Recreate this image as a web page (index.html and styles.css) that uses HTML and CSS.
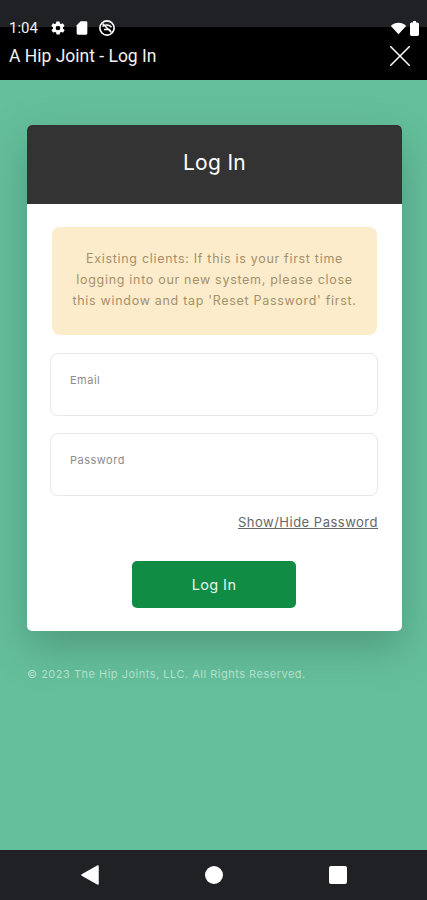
FILE: index.html
```html
<!DOCTYPE html>
<html lang="en">
<head>
    <meta charset="UTF-8">
    <meta name="viewport" content="width=device-width, initial-scale=1.0">
    <title>A Hip Joint - Log In</title>
    <link rel="stylesheet" href="styles.css">
</head>
<body>
    <header class="topbar">
        <div class="status">
            <span class="time">1:04</span>
            <svg class="status-icon" viewBox="0 0 24 24" width="16" height="16"><path fill="#fff" d="M19.4 13c.1-.3.1-.7.1-1s0-.7-.1-1l2.100-1.600c.2-.2.2-.4.1-.6l-2-3.500c-.1-.2-.4-.3-.6-.2l-2.500 1c-.5-.4-1.100-.7-1.700-1l-.4-2.600c0-.2-.2-.4-.5-.4h-4c-.2 0-.5.2-.5.400l-.4 2.600c-.6.300-1.200.6-1.700 1l-2.500-1c-.2-.1-.5 0-.6.200l-2 3.500c-.1.200-.1.400.1.600L4.600 11c-.1.300-.1.700-.1 1s0 .7.1 1l-2.100 1.600c-.2.200-.2.400-.1.600l2 3.500c.1.200.4.300.6.200l2.500-1c.5.400 1.100.7 1.700 1l.4 2.600c0 .2.300.4.500.4h4c.3 0 .5-.2.500-.4l.4-2.600c.6-.3 1.200-.6 1.700-1l2.500 1c.2.100.5 0 .6-.2l2-3.500c.1-.2.100-.4-.1-.6zM12 15.500a3.500 3.500 0 1 1 0-7 3.500 3.500 0 0 1 0 7z"/></svg>
            <svg class="status-icon" viewBox="0 0 24 24" width="16" height="16"><path fill="#fff" d="M18 2h-8L4 8v12c0 1.100.9 2 2 2h12c1.100 0 2-.9 2-2V4c0-1.100-.9-2-2-2z"/></svg>
            <svg class="status-icon" viewBox="0 0 24 24" width="18" height="18"><circle cx="12" cy="12" r="9.500" fill="none" stroke="#fff" stroke-width="2.200"/><path fill="none" stroke="#fff" stroke-width="2" d="M6 10c3-3 9-3 12 1M8 14h7l2 2M6 6l12 12"/></svg>
            <span class="status-right">
                <svg viewBox="0 0 24 20" width="17" height="14"><path fill="#fff" d="M12 19 1 7c6-6 16-6 22 0z"/></svg>
                <svg viewBox="0 0 12 20" width="9" height="15"><path fill="#fff" d="M4 0h4v2h2c1 0 2 1 2 2v14c0 1-1 2-2 2H2c-1 0-2-1-2-2V4c0-1 1-2 2-2h2z"/></svg>
            </span>
        </div>
        <div class="titlebar">
            <span class="page-title">A Hip Joint - Log In</span>
            <svg class="close" viewBox="0 0 20 20" width="20" height="20"><path stroke="#fff" stroke-width="1.500" d="M0 0l20 20M20 0 0 20"/></svg>
        </div>
    </header>

    <main class="content">
        <div class="card">
            <div class="card-head">Log In</div>
            <div class="card-body">
                <div class="notice">Existing clients: If this is your first time<br>logging into our new system, please close<br>this window and tap 'Reset Password' first.</div>
                <div class="field"><label>Email</label></div>
                <div class="field"><label>Password</label></div>
                <div class="toggle"><a href="#">Show/Hide Password</a></div>
                <button class="submit">Log In</button>
            </div>
        </div>
        <p class="copyright">© 2023 The Hip Joints, LLC. All Rights Reserved.</p>
    </main>

    <nav class="navbar">
        <svg viewBox="0 0 18 20" width="18" height="20"><path fill="#fff" stroke="#fff" stroke-width="1.500" stroke-linejoin="round" d="M17 1v18L1 10z"/></svg>
        <span class="nav-home"></span>
        <span class="nav-recent"></span>
    </nav>
</body>
</html>
```

FILE: styles.css
```css
* {
    box-sizing: border-box;
}

body {
    margin: 0;
    height: 900px;
    display: flex;
    flex-direction: column;
    overflow: hidden;
    font-family: Inter, "Liberation Sans", sans-serif;
    background: #65bf9b;
}

.topbar {
    height: 80px;
    flex: none;
    padding: 18px 0 0 9px;
    background: linear-gradient(#202124 27px, #000 27px);
    color: #f2f2f2;
    font-family: Roboto, sans-serif;
}

.status {
    display: flex;
    align-items: center;
    gap: 8px;
    height: 20px;
    padding-right: 8px;
}

.time {
    font-size: 15px;
    margin-right: 4px;
}

.status-right {
    margin-left: auto;
    display: flex;
    align-items: center;
    gap: 3px;
}

.titlebar {
    display: flex;
    align-items: center;
    justify-content: space-between;
    padding-right: 17px;
    height: 36px;
}

.page-title {
    font-size: 17.500px;
}

.content {
    flex: 1;
    padding: 45px 25px 0 27px;
}

.card {
    border-radius: 5px;
    overflow: hidden;
    background: #fff;
    box-shadow: 0 16px 40px rgba(40, 90, 70, 0.35);
}

.card-head {
    height: 79px;
    background: #333;
    color: #fff;
    font-size: 21px;
    letter-spacing: 0.3px;
    line-height: 76px;
    text-align: center;
}

.card-body {
    padding: 23px 24px 23px 23px;
    display: flex;
    flex-direction: column;
}

.notice {
    margin: 0 1px 18px 2px;
    height: 108px;
    padding: 21px 0;
    border-radius: 8px;
    background: #fdeccb;
    color: #a3906a;
    font-size: 12.500px;
    letter-spacing: 0.7px;
    line-height: 21px;
    text-align: center;
    white-space: nowrap;
}

.field {
    height: 63px;
    margin-bottom: 17px;
    padding: 20px 19px;
    border: 1.500px solid #e8e8e8;
    border-radius: 8px;
}

.field label {
    display: block;
    color: #8c8c8c;
    font-size: 11px;
    letter-spacing: 0.5px;
    line-height: 13px;
}

.toggle {
    text-align: right;
    margin-top: -1px;
    line-height: 18px;
}

.toggle a {
    color: #666;
    font-size: 13px;
    letter-spacing: 0.5px;
}

.submit {
    align-self: center;
    width: 164px;
    height: 47px;
    margin-top: 30px;
    border: 0;
    border-radius: 5px;
    background: #118c45;
    color: #e8f5ec;
    font-family: inherit;
    font-size: 14.500px;
    letter-spacing: 0.4px;
}

.copyright {
    margin: 36px 0 0;
    color: #b2dfcb;
    font-size: 11px;
    letter-spacing: 0.5px;
    line-height: 14px;
}

.navbar {
    height: 50px;
    flex: none;
    background: #202124;
    display: flex;
    align-items: center;
    justify-content: center;
    gap: 106px;
}

.nav-home {
    width: 18px;
    height: 18px;
    border-radius: 50%;
    background: #fff;
}

.nav-recent {
    width: 18px;
    height: 18px;
    border-radius: 2px;
    background: #fff;
}
```
